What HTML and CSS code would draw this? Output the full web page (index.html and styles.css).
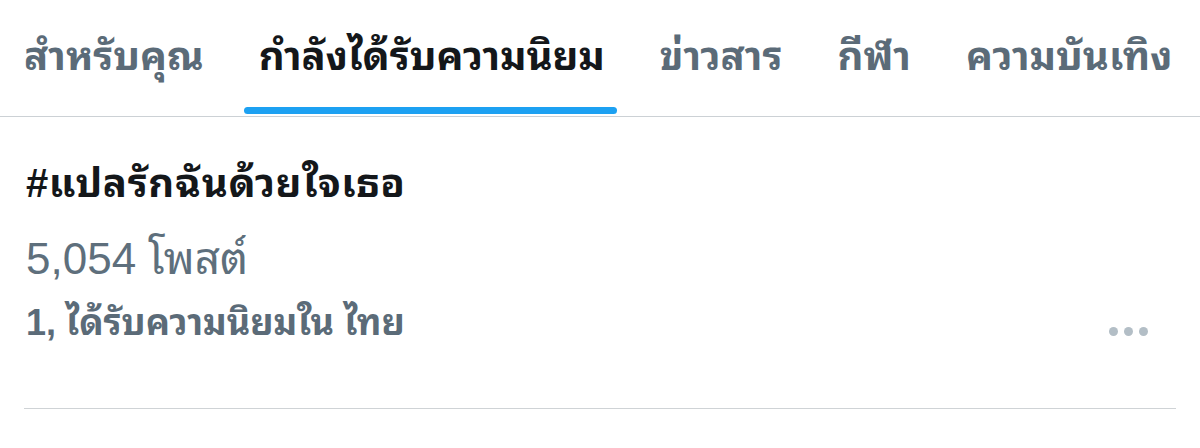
FILE: index.html
```html
<!DOCTYPE html>
<html lang="th">
<head>
<meta charset="utf-8">
<link rel="stylesheet" href="styles.css">
</head>
<body>
<div class="page">
  <nav class="tabs">
    <div class="tab">สำหรับคุณ</div>
    <div class="tab active">กำลังได้รับความนิยม</div>
    <div class="tab">ข่าวสาร</div>
    <div class="tab">กีฬา</div>
    <div class="tab">ความบันเทิง</div>
  </nav>
  <section class="trend">
    <div class="trend-main">
      <div class="trend-title">#แปลรักฉันด้วยใจเธอ</div>
      <div class="trend-count">5,054 โพสต์</div>
      <div class="trend-meta">1, ได้รับความนิยมใน ไทย</div>
    </div>
    <div class="more" aria-label="more">
      <span class="dot"></span><span class="dot"></span><span class="dot"></span>
    </div>
  </section>
</div>
</body>
</html>
```
FILE: styles.css
```css
* { box-sizing: border-box; }
html, body { margin: 0; padding: 0; background: #fff; }
body {
  font-family: "Liberation Sans", "Noto Sans Thai Looped", "Noto Sans Thai", sans-serif;
  width: 1200px;
  height: 448px;
  overflow: hidden;
}
.tabs {
  display: flex;
  gap: 31px;
  padding-left: 12px;
  height: 117px;
  border-bottom: 1px solid #ccd1d5;
  align-items: stretch;
}
.tab {
  position: relative;
  padding: 20px 12px 0;
  font-size: 40px;
  font-weight: bold;
  color: #5b6b78;
  white-space: nowrap;
}
.tab.active { color: #14171a; }
.tab.active::after {
  content: "";
  position: absolute;
  left: -3px;
  right: 0;
  bottom: 2px;
  height: 7px;
  border-radius: 4px;
  background: #1da1f2;
}
.trend {
  margin: 0 24px;
  display: flex;
  justify-content: space-between;
  border-bottom: 1px solid #cfd3d6;
  height: 292px;
}
.trend-main {
  padding-top: 36px;
  padding-left: 2px;
}
.trend-title {
  font-size: 40px;
  letter-spacing: 0.6px;
  font-weight: bold;
  color: #14171a;
  line-height: 60px;
}
.trend-count {
  margin-top: 16px;
  font-size: 44px;
  color: #5e6f7c;
  line-height: 60px;
}
.trend-meta {
  margin-top: 8px;
  font-size: 36px;
  font-weight: bold;
  color: #5b6b78;
  line-height: 52px;
}
.more {
  display: flex;
  gap: 6px;
  padding-top: 210px;
  padding-right: 28px;
}
.dot {
  width: 9px;
  height: 9px;
  border-radius: 50%;
  background: #b3bec6;
}
```
